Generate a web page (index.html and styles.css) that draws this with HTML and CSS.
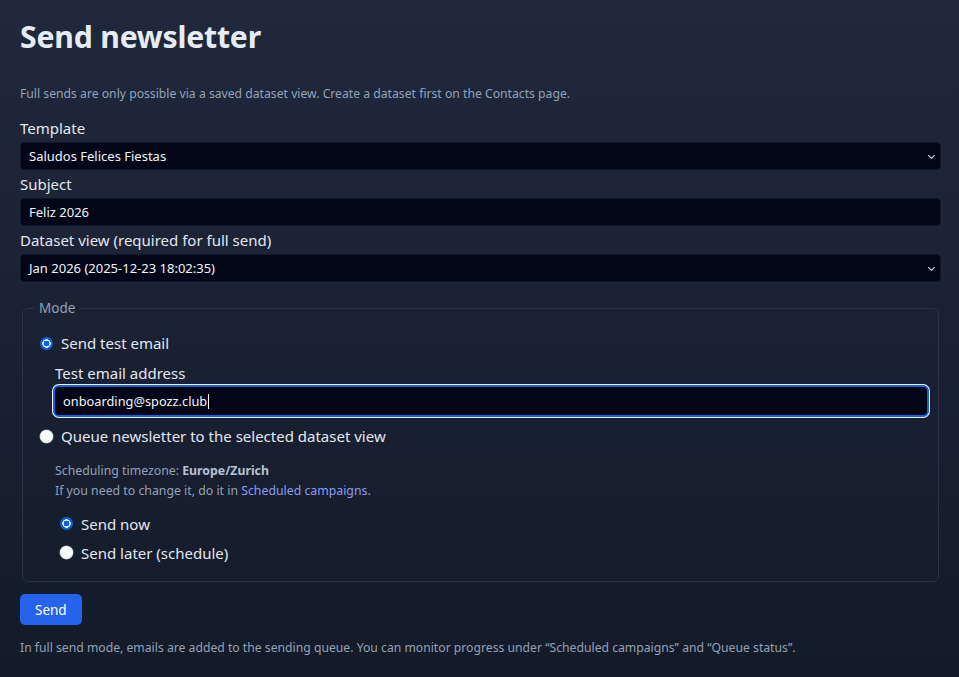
FILE: index.html
```html
<!DOCTYPE html>
<html lang="en">
<head>
<meta charset="utf-8">
<title>Send newsletter</title>
<link rel="stylesheet" href="styles.css">
</head>
<body>
<main class="page">
  <h1 class="title">Send newsletter</h1>
  <p class="muted intro">Full sends are only possible via a saved dataset view. Create a dataset first on the Contacts page.</p>

  <div class="field">
    <label class="label">Template</label>
    <div class="control select">Saludos Felices Fiestas<span class="chev"></span></div>
  </div>
  <div class="field">
    <label class="label">Subject</label>
    <div class="control">Feliz 2026</div>
  </div>
  <div class="field">
    <label class="label">Dataset view (required for full send)</label>
    <div class="control select">Jan 2026 (2025-12-23 18:02:35)<span class="chev"></span></div>
  </div>

  <fieldset class="mode">
    <legend class="legend">Mode</legend>
    <div class="radio-row"><span class="radio checked"></span><span>Send test email</span></div>
    <div class="sub">
      <label class="label">Test email address</label>
      <div class="control focus">onboarding@spozz.club<span class="caret"></span></div>
    </div>
    <div class="radio-row"><span class="radio"></span><span>Queue newsletter to the selected dataset view</span></div>
    <div class="sub notes">
      <p class="small">Scheduling timezone: <strong class="strong">Europe/Zurich</strong></p>
      <p class="small">If you need to change it, do it in <a class="link">Scheduled campaigns</a>.</p>
    </div>
    <div class="sub2">
      <div class="radio-row tight"><span class="radio checked"></span><span>Send now</span></div>
      <div class="radio-row tight"><span class="radio"></span><span>Send later (schedule)</span></div>
    </div>
  </fieldset>

  <button class="btn">Send</button>
  <p class="muted footer">In full send mode, emails are added to the sending queue. You can monitor progress under “Scheduled campaigns” and “Queue status”.</p>
</main>
</body>
</html>
```

FILE: styles.css
```css
* { box-sizing: border-box; }
html, body { margin: 0; height: 100%; }
body {
  background: linear-gradient(180deg, #1f293b 0%, #1a2133 50%, #131a28 100%);
  color: #e2e8f0;
  font-family: "Noto Sans", "Open Sans", sans-serif;
}
.page {
  padding: 16px 18px 0 20px;
}
.title {
  margin: 0;
  font-size: 30.2px;
  font-weight: 700;
  line-height: 42px;
  color: #e5ecf5;
  letter-spacing: -0.2px;
}
.muted { color: #94a3b8; font-size: 12.2px; margin: 0; }
.intro { margin-top: 26px; line-height: 20px; margin-bottom: 12px; }
.field { margin-bottom: 2px; }
.label {
  display: block;
  font-size: 15px;
  line-height: 24px;
  margin-bottom: 2px;
  color: #e2e8f0;
}
.control {
  position: relative;
  height: 28px;
  background: #020617;
  border: 1px solid #111827;
  border-radius: 4px;
  font-size: 13px;
  line-height: 26px;
  padding: 0 8px;
  color: #f1f5f9;
}
.chev {
  position: absolute;
  right: 6px;
  top: 10px;
  width: 5px;
  height: 5px;
  border-right: 1.5px solid #e2e8f0;
  border-bottom: 1.5px solid #e2e8f0;
  transform: rotate(45deg);
}
.mode {
  margin: 19px 2px 0;
  border: 1px solid #2a3446;
  border-radius: 6px;
  padding: 15px 9px 14px 17px;
  min-width: 0;
}
.legend {
  color: #94a3b8;
  font-size: 13.5px;
  padding: 0 4px;
  margin-left: -5px;
  line-height: 14px;
}
.radio-row {
  display: flex;
  align-items: center;
  gap: 8px;
  font-size: 15px;
  line-height: 22px;
  height: 26px;
}
.radio {
  width: 13px;
  height: 13px;
  border-radius: 50%;
  background: #f8fafc;
  box-shadow: 0 0 0 0.5px #9aa4b2;
  flex: none;
}
.radio.checked {
  background: radial-gradient(circle, #0b61e0 0 2.8px, #ffffff 3.1px 4px, #0b61e0 4.4px);
  box-shadow: none;
}
.sub { padding-left: 15px; }
.sub .label { margin-top: 5px; margin-bottom: 0; }
.focus {
  height: 32px;
  margin-left: -2px;
  margin-bottom: 6px;
  border: 2px solid #0f62e6;
  border-radius: 6px;
  box-shadow: 0 0 0 1px #f1f5f9;
  line-height: 28px;
  padding-left: 8px;
  font-size: 12.8px;
}
.caret {
  display: inline-block;
  width: 1px;
  height: 15px;
  background: #f8fafc;
  vertical-align: -3px;
  margin-left: 1px;
}
.notes { margin-top: 12px; }
.small { margin: 0; font-size: 12.3px; line-height: 20px; color: #94a3b8; }
.strong { color: #b6c2d3; font-weight: 700; }
.link { color: #8b9cf7; text-decoration: none; }
.sub2 { padding-left: 20px; margin-top: 8px; }
.radio-row.tight { height: 29px; }
.btn {
  margin-top: 12px;
  background: #2563eb;
  color: #fff;
  border: none;
  border-radius: 5px;
  font-family: inherit;
  font-size: 13.5px;
  height: 31px;
  padding: 0 15px;
  display: block;
}
.footer { margin-top: 13px; line-height: 20px; }
```
